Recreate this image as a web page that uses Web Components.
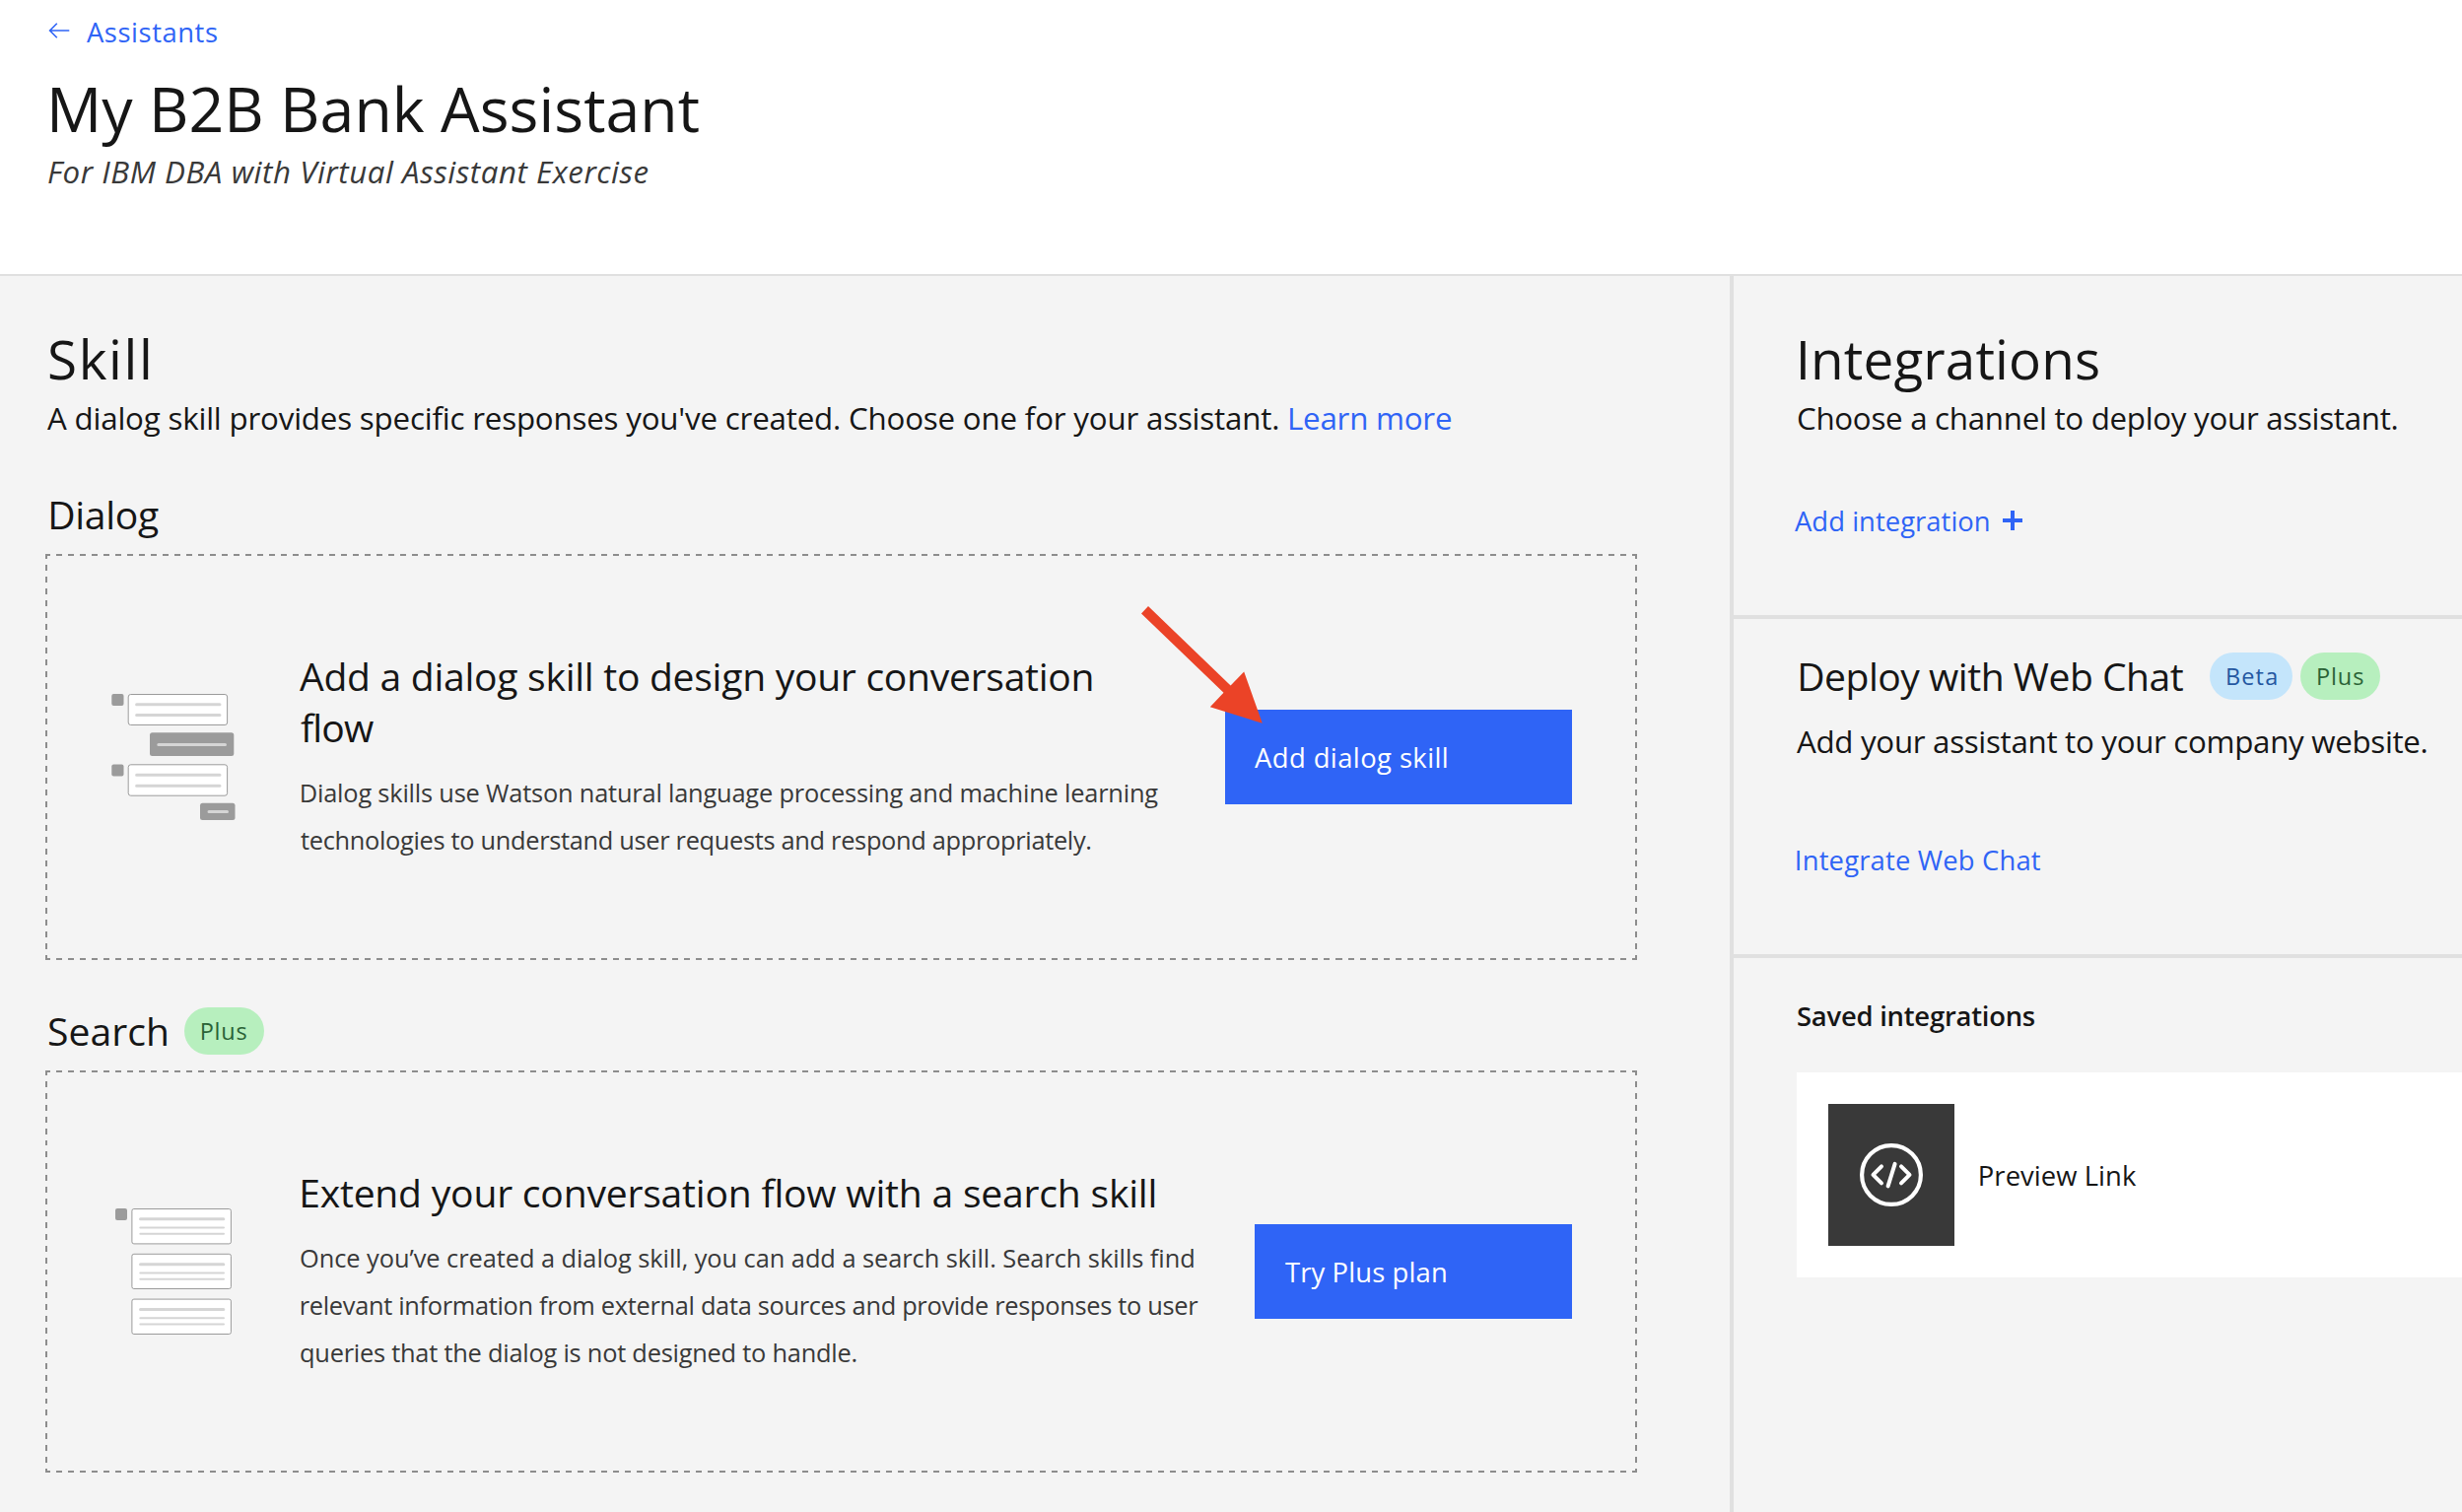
<!DOCTYPE html>
<html lang="en">
<head>
<meta charset="utf-8">
<title>My B2B Bank Assistant</title>
<style>
  html, body { margin: 0; height: 100%; overflow: hidden; }
  body { font-family: "Open Sans", "Noto Sans", sans-serif; color: #161616; background: #f4f4f4; }
</style>
</head>
<body>
<assistant-page></assistant-page>
<script>
const define = (name, html, setup) => {
  const template = document.createElement('template');
  template.innerHTML = html;
  customElements.define(name, class extends HTMLElement {
    connectedCallback() {
      if (this.shadowRoot) return;
      this.attachShadow({ mode: 'open' }).append(template.content.cloneNode(true));
      if (setup) setup(this, this.shadowRoot);
    }
  });
};

/* One line of type. "w" is the inked width; tracking is derived from it,
   and the first glyph is aligned optically to the left edge. */
const pen = document.createElement('canvas').getContext('2d');
define('text-line', `
  <style>
    :host { display: block; flex: none; white-space: nowrap; }
    span { display: block; }
  </style><span><slot></slot></span>`, (el, root) => {
  const span = root.querySelector('span');
  const text = el.textContent;
  const size = +el.getAttribute('size');
  const weight = el.getAttribute('weight') || 400;
  const slant = el.hasAttribute('italic') ? 'italic' : 'normal';
  const width = +el.getAttribute('w');
  pen.font = `${slant} ${weight} ${size}px "Open Sans", "Noto Sans", sans-serif`;
  pen.letterSpacing = '0.01px';
  const m = pen.measureText(text);
  const ink = m.actualBoundingBoxLeft + m.actualBoundingBoxRight;
  /* straight stems sit a little inside the edge, an A a little outside it */
  const nudge = slant === 'italic' ? 0 : /^[BDEIMPr]/.test(text) ? size * 0.03 : /^A/.test(text) ? -1 : 0;
  const tracking = (width - nudge - ink) / (text.length - 1);
  span.style.cssText = `font: ${slant} ${weight} ${size}px/${el.getAttribute('lh')}px "Open Sans", "Noto Sans", sans-serif;
    letter-spacing: ${tracking.toFixed(3)}px; margin-left: ${(m.actualBoundingBoxLeft + nudge).toFixed(2)}px; width: ${width}px`;
});

define('plan-tag', `
  <style>
    :host { display: flex; flex: none; box-sizing: border-box; height: 48px; border-radius: 24px; padding-left: 17px; }
    :host([kind=plus]) { width: 81px; background: #b7efbe; color: #2a6236; }
    :host([kind=beta]) { width: 84px; background: #c4e5fb; color: #2457a1; }
  </style><slot></slot>`);

define('primary-button', `
  <style>
    :host { display: flex; align-items: center; box-sizing: border-box; height: 96px; padding: 2px 0 0 31px;
      margin-left: auto; background: #2f64f6; color: #fff; flex: none; }
  </style><slot></slot>`);

define('dialog-art', `
  <style>:host { display: block; flex: none; width: 128px; height: 128px; } svg { display: block; }</style>
  <svg width="128" height="128" viewBox="112 704 128 128">
    <g fill="#9b9b9b">
      <rect x="113.3" y="704" width="12.2" height="12" rx="2"/>
      <rect x="113.3" y="775.4" width="12.2" height="12" rx="2"/>
      <rect x="152" y="743.3" width="85.3" height="23.7" rx="2.5"/>
      <rect x="203" y="814.8" width="35.5" height="17.2" rx="2.5"/>
    </g>
    <g fill="#fff" stroke="#9b9b9b">
      <rect x="130.2" y="704.5" width="100.4" height="31" rx="2.5"/>
      <rect x="130.2" y="775.8" width="100.4" height="31.4" rx="2.5"/>
    </g>
    <g stroke="#d5d5d5" stroke-width="3" stroke-linecap="round">
      <path d="M138.600 714.800H223M138.600 725.500H223M160.800 755.400H228.500M138.600 786.300H223M138.600 797.200H223M212 823.600H230.500"/>
    </g>
  </svg>`);

define('search-art', `
  <style>:host { display: block; flex: none; width: 128px; height: 128px; } svg { display: block; }</style>
  <svg width="128" height="128" viewBox="112 1226 128 128">
    <rect x="117" y="1226" width="12" height="12" rx="2" fill="#9b9b9b"/>
    <g fill="#fff" stroke="#9b9b9b">
      <rect x="133.900" y="1226.500" width="100.500" height="35.400" rx="2"/>
      <rect x="133.900" y="1272.300" width="100.500" height="35.200" rx="2"/>
      <rect x="133.900" y="1318.100" width="100.500" height="35.400" rx="2"/>
    </g>
    <g stroke="#d5d5d5" stroke-linecap="round">
      <path stroke-width="3" d="M142.500 1236.800H226.800M142.500 1282.800H226.800M142.500 1328.600H226.800"/>
      <path stroke-width="2" d="M142.300 1245.400H227M142.300 1251.800H227M142.300 1291.400H227M142.300 1297.700H227M142.300 1337.200H227M142.300 1343.600H227"/>
    </g>
  </svg>`);

define('skill-card', `
  <style>
    :host { display: flex; align-items: center; box-sizing: border-box; padding: 0 66px; position: relative;
      --h: repeating-linear-gradient(90deg, #8d8d8d 0 5px, transparent 5px 11px, #8d8d8d 11px 12.023px);
      --v: repeating-linear-gradient(180deg, #8d8d8d 0 5px, transparent 5px 11px, #8d8d8d 11px var(--pitch, 12px));
      background: var(--h) top / 100% 2px no-repeat, var(--h) bottom / 100% 2px no-repeat,
        var(--v) left / 2px 100% no-repeat, var(--v) right / 2px 100% no-repeat; }
    .copy { display: flex; flex-direction: column; margin-left: 65px; width: 0; }
    .body { margin-top: 16px; color: #393939; }
  </style>
  <slot name="art"></slot>
  <div class="copy"><slot name="title"></slot><div class="body"><slot name="body"></slot></div></div>
  <slot name="action"></slot>
  <slot name="pointer"></slot>`);

define('pointer-arrow', `
  <style>:host { position: absolute; left: 1110px; top: 50px; width: 128px; height: 124px; } svg { display: block; }</style>
  <svg width="128" height="124" viewBox="1156 612 128 124">
    <path fill="#eb4327" d="M1165 615L1248.600 695.600L1262.200 681.600L1280.800 733.800L1227.800 717.200L1241.500 702.800L1158 622.400Z"/>
  </svg>`);

define('page-header', `
  <style>
    :host { display: flex; flex-direction: column; box-sizing: border-box; height: 280px; flex: none;
      padding: 14px 0 0 49px; background: #fff; border-bottom: 2px solid #e0e0e0; }
    .back { display: flex; color: #2f64f6; gap: 18px; }
    svg { display: block; margin-top: 8px; flex: none; }
    .title { margin: 18px 0 4px 2px; }
    .sub { color: #393939; }
  </style>
  <div class="back">
    <svg width="22" height="20" viewBox="49 22 22 20" fill="none" stroke="#2f64f6" stroke-width="1.600">
      <path d="M70.300 31H51M57.800 23.800L50.600 31L57.800 38.200"/>
    </svg>
    <text-line size="27.4" lh="38" w="131">Assistants</text-line>
  </div>
  <div class="title"><text-line size="62.6" lh="80" w="658">My B2B Bank Assistant</text-line></div>
  <div class="sub"><text-line italic size="31.3" lh="40" w="609">For IBM DBA with Virtual Assistant Exercise</text-line></div>`);

define('skill-panel', `
  <style>
    :host { display: flex; flex-direction: column; box-sizing: border-box; width: 1755px; flex: none; padding: 48px 94px 0 46px; }
    .in { margin-left: 4px; }
    .intro { display: flex; gap: 13px; margin: 4px 0 0 3px; }
    .link { color: #2f64f6; }
    .dialog { margin-top: 52px; margin-bottom: 14px; }
    .search { display: flex; align-items: center; gap: 20px; height: 48px; margin-top: 48px; margin-bottom: 16px; }
    .one { height: 412px; } .two { height: 408px; --pitch: 11.91px; }
    .b1 { width: 352px; } .b2 { width: 322px; }
  </style>
  <text-line class="in" size="54.8" lh="72" w="101">Skill</text-line>
  <div class="intro">
    <text-line size="31.3" lh="40" w="1248">A dialog skill provides specific responses you've created. Choose one for your assistant.</text-line>
    <text-line class="link" size="31.3" lh="40" w="163">Learn more</text-line>
  </div>
  <text-line class="in dialog" size="39.1" lh="52" w="111">Dialog</text-line>
  <skill-card class="one">
    <dialog-art slot="art"></dialog-art>
    <text-line slot="title" size="39.1" lh="52" w="803">Add a dialog skill to design your conversation</text-line>
    <text-line slot="title" size="39.1" lh="52" w="74">flow</text-line>
    <text-line slot="body" size="25.4" lh="48" w="871">Dialog skills use Watson natural language processing and machine learning</text-line>
    <text-line slot="body" size="25.4" lh="48" w="802">technologies to understand user requests and respond appropriately.</text-line>
    <primary-button slot="action" class="b1"><text-line size="27.4" lh="36" w="194">Add dialog skill</text-line></primary-button>
    <pointer-arrow slot="pointer"></pointer-arrow>
  </skill-card>
  <div class="search in">
    <text-line size="39.1" lh="52" w="119">Search</text-line>
    <plan-tag kind="plus"><text-line size="23.5" lh="48" w="46.500">Plus</text-line></plan-tag>
  </div>
  <skill-card class="two">
    <search-art slot="art"></search-art>
    <text-line slot="title" size="39.1" lh="52" w="867">Extend your conversation flow with a search skill</text-line>
    <text-line slot="body" size="25.4" lh="48" w="907">Once you’ve created a dialog skill, you can add a search skill. Search skills find</text-line>
    <text-line slot="body" size="25.4" lh="48" w="911">relevant information from external data sources and provide responses to user</text-line>
    <text-line slot="body" size="25.4" lh="48" w="564">queries that the dialog is not designed to handle.</text-line>
    <primary-button slot="action" class="b2"><text-line size="27.4" lh="36" w="163">Try Plus plan</text-line></primary-button>
  </skill-card>`);

define('integration-card', `
  <style>
    :host { display: flex; align-items: center; height: 208px; box-sizing: border-box; padding-left: 32px; gap: 25px; background: #fff; }
    ::slotted(text-line) { margin-top: 2px; }
    .tile { display: flex; align-items: center; justify-content: center; width: 128px; height: 144px; background: #393939; flex: none; }
  </style>
  <div class="tile">
    <svg width="64" height="64" viewBox="0 0 64 64" fill="none" stroke="#fff" stroke-linecap="round" stroke-linejoin="round">
      <circle cx="32" cy="32" r="29.900" stroke-width="4.200"/>
      <path stroke-width="4" d="M22 23.300L13.500 31.800L22 40.300M42 23.300L50.500 31.800L42 40.300M35.600 20.800L28.600 43.400"/>
    </svg>
  </div>
  <slot></slot>`);

define('integrations-panel', `
  <style>
    :host { display: flex; flex-direction: column; flex: 1; min-width: 0; border-left: 4px solid #e0e0e0; }
    section { box-sizing: border-box; padding-left: 64px; border-bottom: 4px solid #e0e0e0; }
    .first { height: 348px; padding-top: 48px; }
    .second { height: 344px; padding-top: 32px; }
    .last { border: 0; padding-top: 40px; }
    .in { margin-left: 2px; } .in1 { margin-left: 1px; }
    .gap { margin-top: 4px; }
    .link { color: #2f64f6; margin-left: -1px; }
    .add { display: flex; gap: 15px; margin-top: 66px; }
    .add svg { display: block; margin-top: 8px; }
    .head { display: flex; align-items: center; height: 52px; }
    .head plan-tag { margin-left: 8px; }
    .head plan-tag:first-of-type { margin-left: 25px; }
    .head text-line { margin-right: 3px; }
    .site { margin-top: 20px; }
    .web { margin-top: 82px; }
    integration-card { margin-top: 38px; }
  </style>
  <section class="first">
    <text-line class="in" size="54.8" lh="72" w="304">Integrations</text-line>
    <text-line class="in1 gap" size="31.3" lh="40" w="608">Choose a channel to deploy your assistant.</text-line>
    <div class="link add">
      <text-line size="27.4" lh="38" w="196">Add integration</text-line>
      <svg width="20" height="20" viewBox="0 0 20 20" fill="none" stroke="#2f64f6" stroke-width="4"><path d="M10 0V20M0 10H20"/></svg>
    </div>
  </section>
  <section class="second">
    <div class="head">
      <text-line class="in" size="39.1" lh="52" w="391">Deploy with Web Chat</text-line>
      <plan-tag kind="beta"><text-line size="23.5" lh="48" w="51">Beta</text-line></plan-tag>
      <plan-tag kind="plus"><text-line size="23.5" lh="48" w="47">Plus</text-line></plan-tag>
    </div>
    <text-line class="in1 site" size="31.3" lh="40" w="638">Add your assistant to your company website.</text-line>
    <text-line class="link web" size="27.4" lh="38" w="249">Integrate Web Chat</text-line>
  </section>
  <section class="last">
    <text-line class="in1" weight="600" size="27.4" lh="38" w="241">Saved integrations</text-line>
    <integration-card><text-line size="27.4" lh="36" w="160">Preview Link</text-line></integration-card>
  </section>`);

define('assistant-page', `
  <style>
    :host { display: flex; flex-direction: column; height: 100vh; }
    main { display: flex; flex: 1; min-height: 0; background: #f4f4f4; }
  </style>
  <page-header></page-header>
  <main><skill-panel></skill-panel><integrations-panel></integrations-panel></main>`);
</script>
</body>
</html>
